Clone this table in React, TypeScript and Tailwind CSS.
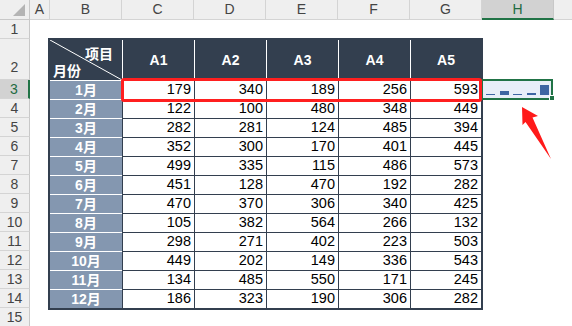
import React from 'react';

const months = [
  { m: '1月', v: [179, 340, 189, 256, 593] },
  { m: '2月', v: [122, 100, 480, 348, 449] },
  { m: '3月', v: [282, 281, 124, 485, 394] },
  { m: '4月', v: [352, 300, 170, 401, 445] },
  { m: '5月', v: [499, 335, 115, 486, 573] },
  { m: '6月', v: [451, 128, 470, 192, 282] },
  { m: '7月', v: [470, 370, 306, 340, 425] },
  { m: '8月', v: [105, 382, 564, 266, 132] },
  { m: '9月', v: [298, 271, 402, 223, 503] },
  { m: '10月', v: [449, 202, 149, 336, 543] },
  { m: '11月', v: [134, 485, 550, 171, 245] },
  { m: '12月', v: [186, 323, 190, 306, 282] },
];

const items = ['A1', 'A2', 'A3', 'A4', 'A5'];

function ColumnHeaders() {
  const cell = 'h-full flex items-center justify-center border-r border-b border-[#d4d4d4]';
  return (
    <div className="flex h-[20px] bg-[#efefef] text-[14px] text-[#444]">
      <div className="relative w-[30px] h-full border-r border-b border-[#c8c8c8]">
        <svg className="absolute right-[4px] bottom-[3px]" width="12" height="12" viewBox="0 0 12 12">
          <polygon points="12,0 12,12 0,12" fill="#b4b4b4" />
        </svg>
      </div>
      <div className={`w-[20px] ${cell}`}>A</div>
      <div className={`w-[72px] ${cell}`}>B</div>
      <div className={`w-[72px] ${cell}`}>C</div>
      <div className={`w-[72px] ${cell}`}>D</div>
      <div className={`w-[72px] ${cell}`}>E</div>
      <div className={`w-[72px] ${cell}`}>F</div>
      <div className={`w-[72px] ${cell}`}>G</div>
      <div className="w-[72px] h-full flex items-center justify-center bg-[#d2d2d2] border-r border-[#c8c8c8] border-b-2 border-b-[#217346] text-[#1e6b41]">
        H
      </div>
      <div className="flex-1 h-full border-b border-[#d4d4d4]" />
    </div>
  );
}

function RowHeaders() {
  const nums = ['1', '2', '3', '4', '5', '6', '7', '8', '9', '10', '11', '12', '13', '14', '15'];
  return (
    <div className="w-[30px] flex flex-col bg-[#efefef] text-[14px] text-[#444]">
      {nums.map((n) => {
        if (n === '2') {
          return (
            <div key={n} className="h-[41px] flex items-end justify-center pb-[1px] border-b border-[#d4d4d4] border-r border-r-[#c8c8c8]">
              {n}
            </div>
          );
        }
        if (n === '3') {
          return (
            <div key={n} className="h-[19px] flex items-center justify-center bg-[#d2d2d2] text-[#1e6b41] border-b border-[#d4d4d4] border-r-2 border-r-[#217346]">
              {n}
            </div>
          );
        }
        return (
          <div key={n} className="h-[19px] flex items-center justify-center border-b border-[#d4d4d4] border-r border-r-[#c8c8c8]">
            {n}
          </div>
        );
      })}
    </div>
  );
}

function DataTable() {
  return (
    <div className="border-2 border-[#333f4f]">
      {/* header row */}
      <div className="flex h-[40px] bg-[#333f4f] text-white font-bold text-[14px]">
        <div className="relative w-[72px] h-full">
          <svg className="absolute inset-0" width="72" height="40" viewBox="0 0 72 40">
            <line x1="0" y1="0" x2="72" y2="40" stroke="#ffffff" strokeWidth="1" />
          </svg>
          <span className="absolute right-[9px] top-[4px] leading-[20px]">项目</span>
          <span className="absolute left-[3px] bottom-0 leading-[18px]">月份</span>
        </div>
        {items.map((it, i) => (
          <div
            key={it}
            className={`h-full flex items-center justify-center border-l border-white ${i === 4 ? 'w-[71px]' : 'w-[72px]'}`}
          >
            {it}
          </div>
        ))}
      </div>
      {/* month rows */}
      {months.map((row) => (
        <div key={row.m} className="flex h-[19px]">
          <div className="w-[72px] h-full flex items-center justify-center bg-[#8497b0] border-t border-white text-white font-bold text-[14px]">
            {row.m}
          </div>
          {row.v.map((n, i) => (
            <div
              key={i}
              className={`h-full flex items-center justify-end pr-[3px] bg-white border-t border-l border-[#333f4f] text-[14.5px] ${i === 4 ? 'w-[71px]' : 'w-[72px]'}`}
            >
              {n}
            </div>
          ))}
        </div>
      ))}
    </div>
  );
}

function Sparkline({ values }: { values: number[] }) {
  const min = Math.min(...values);
  const max = Math.max(...values);
  return (
    <div className="relative w-[72px] h-[21px] border-2 border-[#217346] bg-[#e8eef8]">
      <div className="flex h-full items-end justify-between pl-[3px] pr-[2px] pb-[3px]">
        {values.map((v, i) => (
          <div
            key={i}
            className="w-[9px] bg-[#3d65a2]"
            style={{ height: Math.max(1, Math.round(((v - min) / (max - min)) * 10)) }}
          />
        ))}
      </div>
      <div className="absolute -right-[4px] -bottom-[3px] w-[6px] h-[6px] bg-[#217346] border border-white" />
    </div>
  );
}

export default function App() {
  return (
    <div className="relative w-[572px] h-[326px] overflow-hidden bg-white text-black font-['Liberation_Sans','Noto_Sans_CJK_SC',sans-serif]">
      <ColumnHeaders />
      <div className="flex">
        <RowHeaders />
        <div className="w-[18px] shrink-0" />
        <div className="pt-[18px] shrink-0">
          <DataTable />
        </div>
        <div className="pt-[59px] -ml-[2px] shrink-0">
          <Sparkline values={months[0].v} />
        </div>
      </div>

      {/* red highlight around 1月 row */}
      <div className="absolute left-[121px] top-[78px] w-[361px] h-[24px] border-[3px] border-[#ff1f1f] rounded-[3px]" />

      {/* red arrow */}
      <svg className="absolute left-[515px] top-[100px]" width="45" height="65" viewBox="0 0 45 65">
        <polygon points="7,7 23,16 17.5,17.5 36,59 10.5,22 7.5,25" fill="#ff1a1a" />
      </svg>
    </div>
  );
}
